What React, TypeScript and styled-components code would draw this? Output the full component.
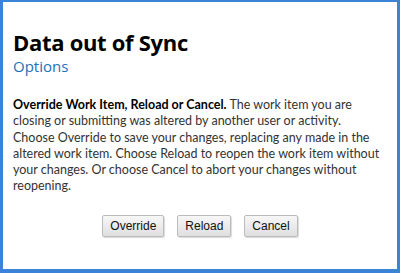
import React from "react";
import styled, { createGlobalStyle } from "styled-components";

const GlobalStyle = createGlobalStyle`
  html, body {
    margin: 0;
    padding: 0;
    background: #ffffff;
  }
`;

const Frame = styled.div`
  box-sizing: border-box;
  width: 400px;
  height: 273px;
  border-style: solid;
  border-color: #3b83d6;
  border-width: 2px 3px 4px 3px;
  background: #ffffff;
  display: flex;
  flex-direction: column;
  padding: 27px 10px 0 10px;
`;

const Title = styled.h1`
  margin: 0;
  font-family: "Open Sans", "Noto Sans", sans-serif;
  font-weight: 700;
  font-size: 22px;
  line-height: 26px;
  color: #000000;
  letter-spacing: -0.3px;
`;

const Subtitle = styled.h2`
  margin: 2px 0 0 0;
  font-family: "Open Sans", "Noto Sans", sans-serif;
  font-weight: 500;
  font-size: 15px;
  line-height: 18px;
  color: #1a72b9;
`;

const Message = styled.p`
  margin: 22px 0 0 0;
  font-family: "Lato", "Noto Sans", sans-serif;
  font-size: 12.5px;
  line-height: 16.3px;
  color: #333333;
  white-space: nowrap;

  strong {
    color: #000000;
    font-weight: 700;
  }
`;

const ButtonRow = styled.div`
  display: flex;
  justify-content: center;
  gap: 13px;
  margin-top: 20px;
`;

const Button = styled.button`
  font-family: "Liberation Sans", Arial, sans-serif;
  font-size: 12px;
  color: #111111;
  height: 22px;
  padding: 0 7px;
  border: 1px solid #bcbcbc;
  border-radius: 2px;
  background: linear-gradient(#f7f7f7, #dfdfdf);
  box-shadow: 1px 1px 1px rgba(0, 0, 0, 0.15);
  cursor: pointer;
`;

export default function App() {
  return (
    <>
      <GlobalStyle />
      <Frame>
        <Title>Data out of Sync</Title>
        <Subtitle>Options</Subtitle>
        <Message>
          <strong>Override Work Item, Reload or Cancel.</strong> The work item you are
          <br />
          closing or submitting was altered by another user or activity.
          <br />
          Choose Override to save your changes, replacing any made in the
          <br />
          altered work item. Choose Reload to reopen the work item without
          <br />
          your changes. Or choose Cancel to abort your changes without
          <br />
          reopening.
        </Message>
        <ButtonRow>
          <Button>Override</Button>
          <Button>Reload</Button>
          <Button>Cancel</Button>
        </ButtonRow>
      </Frame>
    </>
  );
}
